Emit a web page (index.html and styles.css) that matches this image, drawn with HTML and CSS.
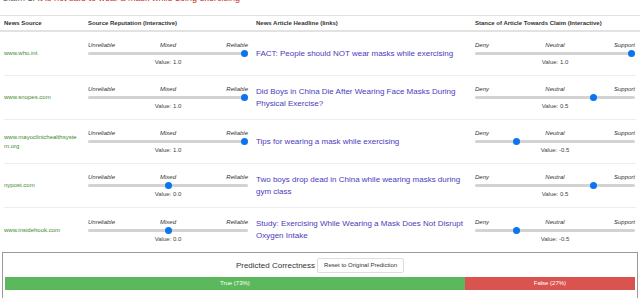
FILE: index.html
```html
<!DOCTYPE html>
<html>
<head>
<meta charset="utf-8">
<link rel="stylesheet" href="styles.css">
</head>
<body>
<div class="claim"><span class="claim-label">Claim 1:</span> <span class="claim-text">It is not safe to wear a mask while doing exercising</span></div>

<div class="table">
  <div class="row head">
    <div class="cell">News Source</div>
    <div class="cell">Source Reputation (Interactive)</div>
    <div class="cell">News Article Headline (links)</div>
    <div class="cell">Stance of Article Towards Claim (Interactive)</div>
  </div>

  <div class="row">
    <div class="cell source">www.who.int</div>
    <div class="cell">
      <div class="slider">
        <div class="labels"><span>Unreliable</span><span>Mixed</span><span>Reliable</span></div>
        <div class="track"><div class="knob" style="left:100%"></div></div>
        <div class="value">Value: 1.0</div>
      </div>
    </div>
    <div class="cell headline"><a href="#">FACT: People should NOT wear masks while exercising</a></div>
    <div class="cell">
      <div class="slider">
        <div class="labels"><span>Deny</span><span>Neutral</span><span>Support</span></div>
        <div class="track"><div class="knob" style="left:100%"></div></div>
        <div class="value">Value: 1.0</div>
      </div>
    </div>
  </div>

  <div class="row">
    <div class="cell source">www.snopes.com</div>
    <div class="cell">
      <div class="slider">
        <div class="labels"><span>Unreliable</span><span>Mixed</span><span>Reliable</span></div>
        <div class="track"><div class="knob" style="left:100%"></div></div>
        <div class="value">Value: 1.0</div>
      </div>
    </div>
    <div class="cell headline"><a href="#">Did Boys in China Die After Wearing Face Masks During Physical Exercise?</a></div>
    <div class="cell">
      <div class="slider">
        <div class="labels"><span>Deny</span><span>Neutral</span><span>Support</span></div>
        <div class="track"><div class="knob" style="left:75%"></div></div>
        <div class="value">Value: 0.5</div>
      </div>
    </div>
  </div>

  <div class="row">
    <div class="cell source">www.mayoclinichealthsystem.org</div>
    <div class="cell">
      <div class="slider">
        <div class="labels"><span>Unreliable</span><span>Mixed</span><span>Reliable</span></div>
        <div class="track"><div class="knob" style="left:100%"></div></div>
        <div class="value">Value: 1.0</div>
      </div>
    </div>
    <div class="cell headline"><a href="#">Tips for wearing a mask while exercising</a></div>
    <div class="cell">
      <div class="slider">
        <div class="labels"><span>Deny</span><span>Neutral</span><span>Support</span></div>
        <div class="track"><div class="knob" style="left:25%"></div></div>
        <div class="value">Value: -0.5</div>
      </div>
    </div>
  </div>

  <div class="row">
    <div class="cell source">nypost.com</div>
    <div class="cell">
      <div class="slider">
        <div class="labels"><span>Unreliable</span><span>Mixed</span><span>Reliable</span></div>
        <div class="track"><div class="knob" style="left:50%"></div></div>
        <div class="value">Value: 0.0</div>
      </div>
    </div>
    <div class="cell headline"><a href="#">Two boys drop dead in China while wearing masks during gym class</a></div>
    <div class="cell">
      <div class="slider">
        <div class="labels"><span>Deny</span><span>Neutral</span><span>Support</span></div>
        <div class="track"><div class="knob" style="left:75%"></div></div>
        <div class="value">Value: 0.5</div>
      </div>
    </div>
  </div>

  <div class="row">
    <div class="cell source">www.insidehook.com</div>
    <div class="cell">
      <div class="slider">
        <div class="labels"><span>Unreliable</span><span>Mixed</span><span>Reliable</span></div>
        <div class="track"><div class="knob" style="left:50%"></div></div>
        <div class="value">Value: 0.0</div>
      </div>
    </div>
    <div class="cell headline"><a href="#">Study: Exercising While Wearing a Mask Does Not Disrupt Oxygen Intake</a></div>
    <div class="cell">
      <div class="slider">
        <div class="labels"><span>Deny</span><span>Neutral</span><span>Support</span></div>
        <div class="track"><div class="knob" style="left:25%"></div></div>
        <div class="value">Value: -0.5</div>
      </div>
    </div>
  </div>
</div>

<div class="panel">
  <div class="panel-top">
    <span class="panel-title">Predicted Correctness</span>
    <button class="reset">Reset to Original Prediction</button>
  </div>
  <div class="bar">
    <div class="seg true" style="width:73%">True (73%)</div>
    <div class="seg false" style="width:27%">False (27%)</div>
  </div>
</div>
</body>
</html>
```

FILE: styles.css
```css
* { box-sizing: border-box; }

html, body {
  margin: 0;
  padding: 0;
  background: #fff;
  overflow: hidden;
}

body {
  font-family: "Liberation Sans", Arial, sans-serif;
  color: #333;
  width: 640px;
  height: 298px;
}

.claim {
  font-size: 9px;
  line-height: 10px;
  height: 10px;
  margin-top: -7px;
  margin-bottom: 12px;
  padding-left: 2px;
  white-space: nowrap;
}

.claim-label { color: #666; }
.claim-text { color: #c9302c; }

.table {
  padding: 0 4px;
}

.row {
  display: grid;
  grid-template-columns: 84px 168px 219px 161px;
  align-items: center;
  height: 44px;
  border-bottom: 1px solid #eee;
}

.row:last-child { border-bottom: none; }

.row.head {
  height: 17px;
  border-top: 1px solid #e2e2e2;
  border-bottom: 2px solid #e2e2e2;
  margin: 0 -4px;
  padding: 0 4px;
  font-size: 6px;
  font-weight: bold;
  color: #333;
}

.cell { min-width: 0; }

.source {
  font-size: 6px;
  line-height: 9px;
  color: #3c8a2e;
  word-break: break-all;
  padding-right: 6px;
}

.headline {
  font-size: 8px;
  line-height: 12px;
  padding-right: 6px;
}

.headline a {
  color: #4a3cbc;
  text-decoration: none;
}

.slider {
  width: 160px;
}

.labels {
  display: grid;
  grid-template-columns: 1fr 1fr 1fr;
  font-size: 6px;
  line-height: 8px;
  font-style: italic;
  color: #333;
}

.labels span:nth-child(1) { text-align: left; }
.labels span:nth-child(2) { text-align: center; }
.labels span:nth-child(3) { text-align: right; }

.track {
  position: relative;
  height: 9px;
  margin-right: 7px;
}

.track::before {
  content: "";
  position: absolute;
  left: 0;
  right: -7px;
  top: 3px;
  height: 3px;
  border-radius: 2px;
  background: #d3d3d3;
}

.knob {
  position: absolute;
  top: 1px;
  width: 7px;
  height: 7px;
  border-radius: 50%;
  background: #0b74f0;
}

.value {
  font-size: 6px;
  line-height: 8px;
  text-align: center;
  color: #444;
}

.panel {
  margin: 0 2px;
  height: 47px;
  border: 1px solid #9a9a9a;
  padding: 4px 2px 0 2px;
}

.panel-top {
  display: flex;
  justify-content: center;
  align-items: center;
  gap: 2px;
  height: 16px;
}

.panel-title {
  font-size: 8px;
  color: #333;
}

.reset {
  font-family: "Liberation Sans", Arial, sans-serif;
  font-size: 6px;
  color: #333;
  background: #fff;
  border: 1px solid #ddd;
  border-radius: 2px;
  height: 15px;
  width: 87px;
  padding: 0;
}

.bar {
  display: flex;
  height: 13px;
  margin-top: 4px;
}

.seg {
  font-size: 6px;
  line-height: 13px;
  color: #fff;
  text-align: center;
}

.seg.true { background: #5cb85c; }
.seg.false { background: #d9534f; }
```
